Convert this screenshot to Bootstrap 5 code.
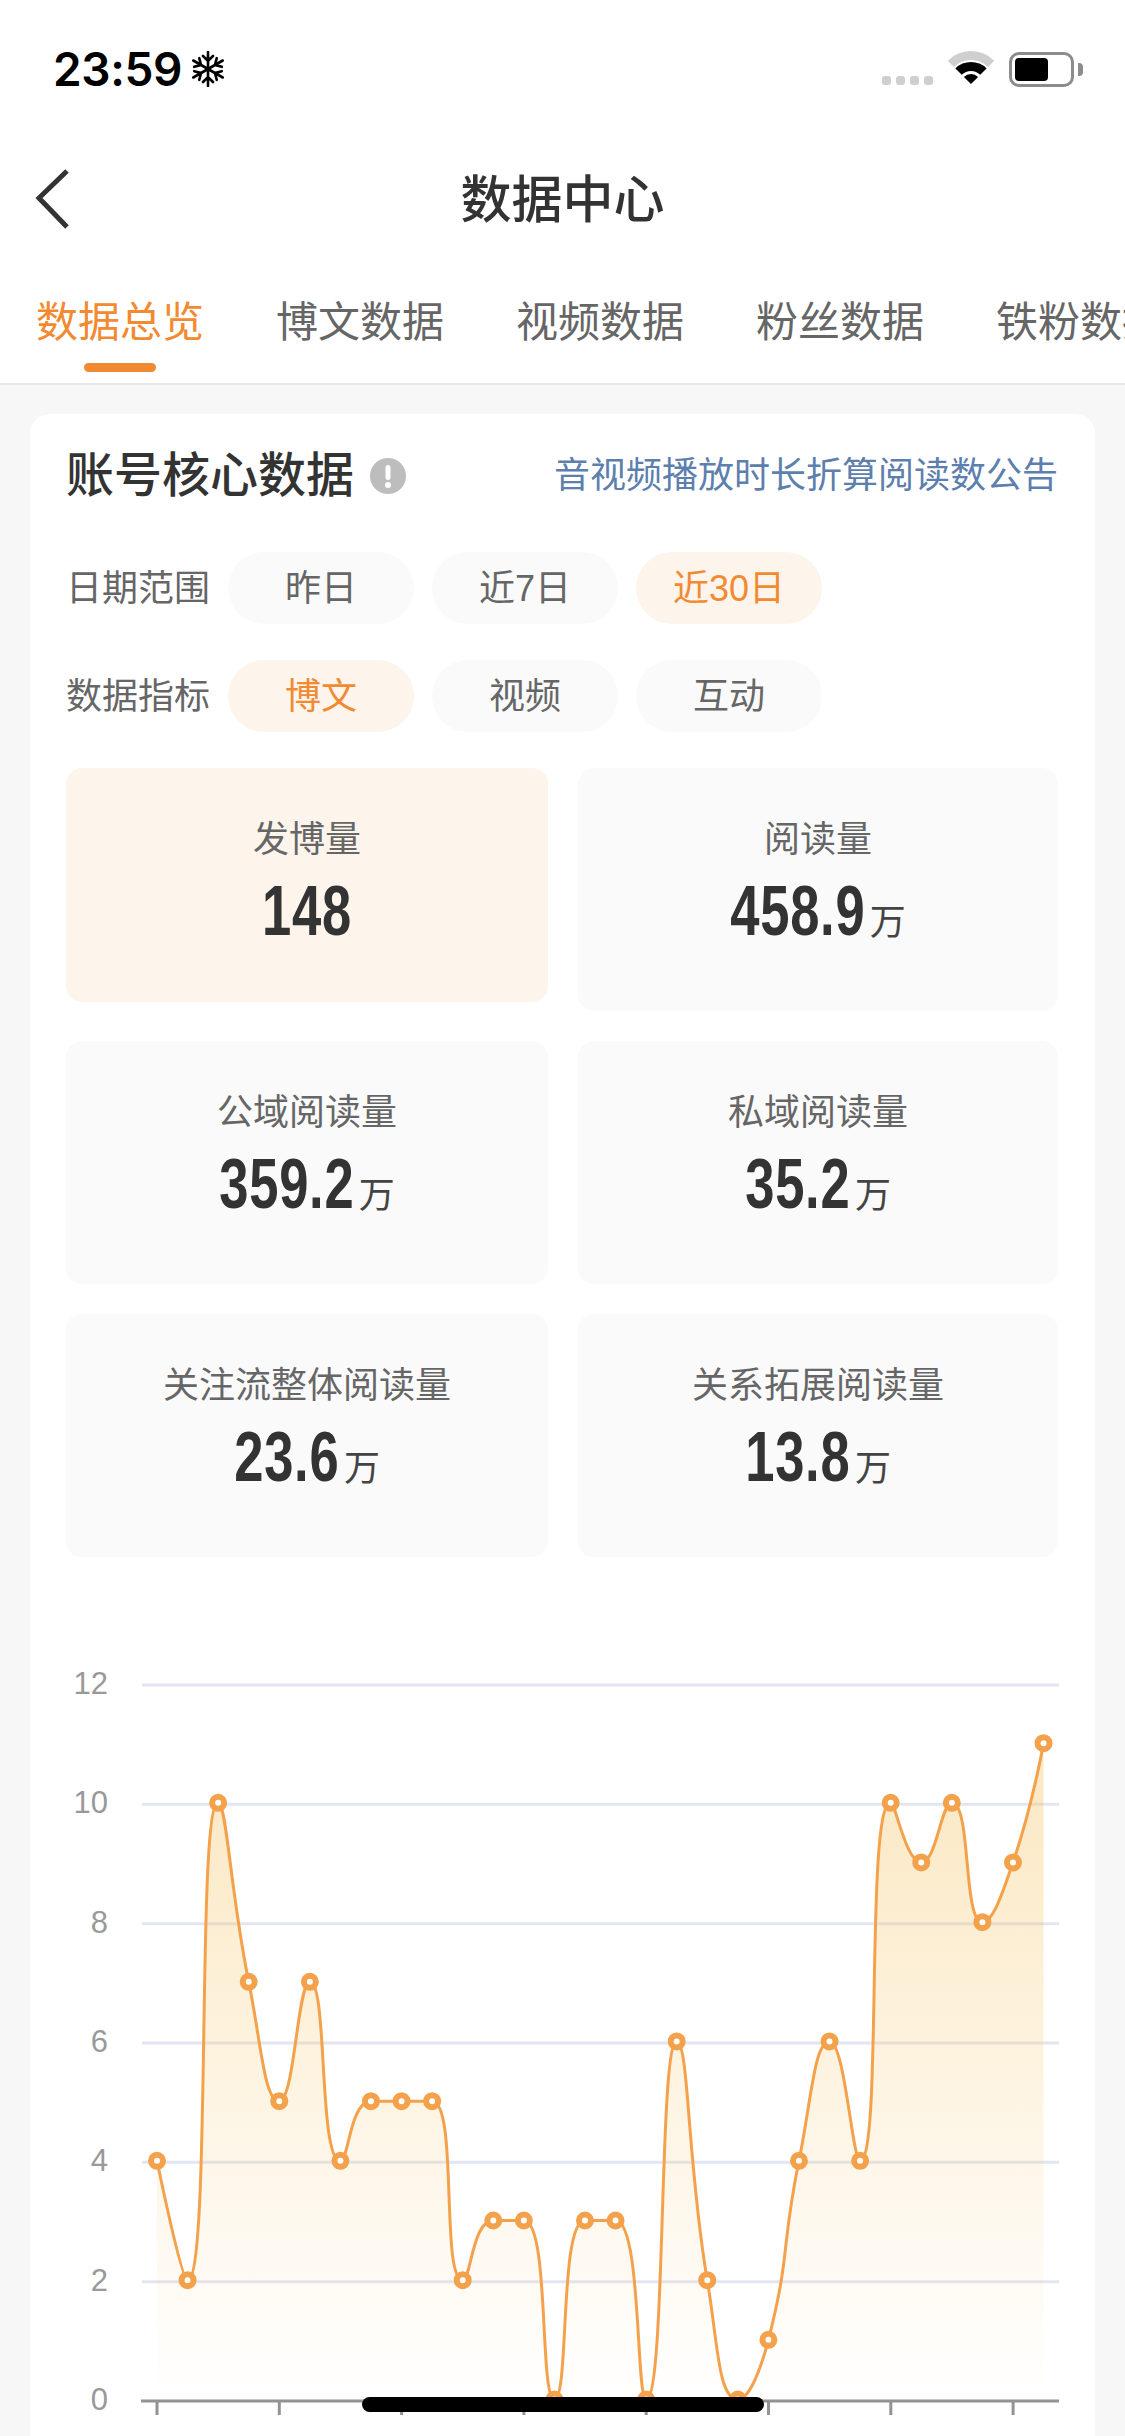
<!DOCTYPE html>
<html lang="zh">
<head>
<meta charset="utf-8">
<title>数据中心</title>
<link href="https://cdn.jsdelivr.net/npm/bootstrap@5.3.0/dist/css/bootstrap.min.css" rel="stylesheet">
<style>
html,body{margin:0;padding:0}
body{position:relative;width:1125px;height:2436px;overflow:hidden;background:#f7f7f7;color:#333;font-family:"Liberation Sans","Noto Sans CJK SC",sans-serif}
.top-white{background:#fff}
.status-strip{height:138px;padding:0 42px 0 53px}
.clock{font-family:Inter,"Liberation Sans",sans-serif;font-weight:600;font-size:46px;line-height:1;color:#000;letter-spacing:-.4px}
.flake{margin-left:9px}
.dots{gap:5px;align-self:flex-end;margin-bottom:2px}
.dots i{display:block;width:9px;height:9px;border-radius:3px;background:#cfcfcf}
.batt{width:65px;height:35px;border:3px solid #8c8c8c;border-radius:10px;padding:3px;margin-left:15px}
.batt i{display:block;width:33px;height:23px;background:#000;border-radius:4px}
.batt-cap{width:5px;height:13px;background:#8c8c8c;border-radius:0 4px 4px 0;margin-left:4px}
.wifi{margin-left:15px}
.nav-strip{height:122px;padding-left:35px}
.nav-title{left:0;right:0;top:2px;bottom:0;font-size:51px;font-weight:500;line-height:122px;text-align:center;color:#333;pointer-events:none}
.tab-strip{height:125px;padding:33px 0 0 36px;gap:72px;overflow:hidden;white-space:nowrap;border-bottom:2px solid #e8e8e8}
.tab-item{flex:none;font-size:42px;line-height:60px;color:#666;display:flex;flex-direction:column;align-items:center}
.tab-item.on{color:#f28a32}
.tab-item.on::after{content:"";display:block;width:72px;height:9px;border-radius:5px;background:#f28a32;margin-top:10px}
.page-wrap{padding:29px 30px 0}
.panel{background:#fff;border-radius:20px 20px 0 0;padding:32px 37px 0 36px;height:2100px}
.panel-head{height:60px}
.panel-title{font-size:48px;font-weight:500;line-height:60px;color:#333}
.info-mark{margin-left:16px}
.notice{font-size:36px;line-height:60px;color:#5d7fae;text-decoration:none}
.filter-row{gap:18px;height:72px;margin-top:36px}
.filter-row.first{margin-top:46px}
.filter-label{font-size:36px;color:#666;width:144px;line-height:74px;white-space:nowrap}
.chip{width:186px;height:72px;border-radius:36px;background:#fafafa;color:#666;font-size:36px;line-height:74px;text-align:center}
.chip.on{background:#fdf4ec;color:#f28a32}
.metric-grid{--bs-gutter-x:30px;--bs-gutter-y:30px;margin-top:6px}
.metric-grid>.col-6:nth-child(odd) .tile{margin-right:-1px}
.metric-grid>.col-6:nth-child(even) .tile{margin-left:1px}
.tile{height:243px;border-radius:16px;background:#fafafa;text-align:center;padding-top:47px}
.tile.on{height:234px;background:#fdf4ec}
.tile-label{font-size:36px;line-height:50px;color:#666}
.tile-value{margin-top:6px;line-height:80px;height:80px;color:#333;white-space:nowrap;transform:scaleX(.74)}
.digits{font-weight:700;font-size:71px;letter-spacing:1px}
.unit{display:inline-block;width:48.6px;margin-left:6px;font-size:36px;line-height:1;color:#444;text-align:center;transform:scaleX(1.351)}
.chart-box{display:block;margin-top:93px;overflow:visible}
.axis-text{font-family:"Liberation Sans",sans-serif;font-size:31px;fill:#999;text-anchor:end;dominant-baseline:central}
.home-bar{left:362px;bottom:24px;width:402px;height:15px;border-radius:8px;background:#000}
</style>
</head>
<body>
<div class="top-white">
  <div class="status-strip d-flex align-items-center justify-content-between">
    <div class="d-flex align-items-center">
      <span class="clock">23:59</span>
      <svg class="flake" width="34" height="36" viewBox="-17 -18 34 36" fill="none" stroke="#000" stroke-width="2.6" stroke-linecap="round">
        <path d="M0 0V-17M-5 -13L0 -8L5 -13M0 0V17M-5 13L0 8L5 13"/>
        <path transform="rotate(60)" d="M0 0V-17M-5 -13L0 -8L5 -13M0 0V17M-5 13L0 8L5 13"/>
        <path transform="rotate(120)" d="M0 0V-17M-5 -13L0 -8L5 -13M0 0V17M-5 13L0 8L5 13"/>
      </svg>
    </div>
    <div class="d-flex align-items-center">
      <div class="dots d-flex"><i></i><i></i><i></i><i></i></div>
      <svg class="wifi" width="46" height="36" viewBox="-23 -33 46 36">
        <path fill="#cfcfcf" d="M-23.3 -23.3A33 33 0 0 1 23.3 -23.3L17 -17A24 24 0 0 0 -17 -17Z"/>
        <path fill="#000" d="M-15.6 -15.6A22 22 0 0 1 15.6 -15.6L9.2 -9.2A13 13 0 0 0 -9.2 -9.2Z"/>
        <path fill="#000" d="M0 0L-7.1 -7.1A10 10 0 0 1 7.1 -7.1Z"/>
      </svg>
      <div class="batt"><i></i></div>
      <div class="batt-cap"></div>
    </div>
  </div>
  <div class="nav-strip position-relative d-flex align-items-center">
    <svg width="36" height="60" viewBox="0 0 36 60" fill="none" stroke="#333" stroke-width="5"><path d="M32 2L4 29L32 58"/></svg>
    <div class="nav-title position-absolute">数据中心</div>
  </div>
  <div class="tab-strip d-flex">
    <div class="tab-item on">数据总览</div>
    <div class="tab-item">博文数据</div>
    <div class="tab-item">视频数据</div>
    <div class="tab-item">粉丝数据</div>
    <div class="tab-item">铁粉数据</div>
  </div>
</div>
<div class="page-wrap">
  <div class="panel">
    <div class="panel-head d-flex align-items-center justify-content-between">
      <div class="d-flex align-items-center">
        <span class="panel-title">账号核心数据</span>
        <svg class="info-mark" width="36" height="36" viewBox="0 0 36 36"><circle cx="18" cy="18" r="18" fill="#bdbdbd"/><rect x="15.5" y="7" width="5" height="15" rx="2.5" fill="#fff"/><circle cx="18" cy="27" r="3" fill="#fff"/></svg>
      </div>
      <a class="notice" href="#">音视频播放时长折算阅读数公告</a>
    </div>
    <div class="filter-row first d-flex">
      <span class="filter-label">日期范围</span>
      <span class="chip">昨日</span><span class="chip">近7日</span><span class="chip on">近30日</span>
    </div>
    <div class="filter-row d-flex">
      <span class="filter-label">数据指标</span>
      <span class="chip on">博文</span><span class="chip">视频</span><span class="chip">互动</span>
    </div>
    <div class="row metric-grid">
      <div class="col-6"><div class="tile on"><div class="tile-label">发博量</div><div class="tile-value"><span class="digits">148</span></div></div></div>
      <div class="col-6"><div class="tile"><div class="tile-label">阅读量</div><div class="tile-value"><span class="digits">458.9</span><span class="unit">万</span></div></div></div>
      <div class="col-6"><div class="tile"><div class="tile-label">公域阅读量</div><div class="tile-value"><span class="digits">359.2</span><span class="unit">万</span></div></div></div>
      <div class="col-6"><div class="tile"><div class="tile-label">私域阅读量</div><div class="tile-value"><span class="digits">35.2</span><span class="unit">万</span></div></div></div>
      <div class="col-6"><div class="tile"><div class="tile-label">关注流整体阅读量</div><div class="tile-value"><span class="digits">23.6</span><span class="unit">万</span></div></div></div>
      <div class="col-6"><div class="tile"><div class="tile-label">关系拓展阅读量</div><div class="tile-value"><span class="digits">13.8</span><span class="unit">万</span></div></div></div>
    </div>
    <svg class="chart-box" id="chart" width="992" height="786" viewBox="66 1650 992 786" xmlns="http://www.w3.org/2000/svg">
      <defs>
        <linearGradient id="areaFill" gradientUnits="userSpaceOnUse" x1="0" y1="1750" x2="0" y2="2401">
          <stop offset="0" stop-color="#f5c25f" stop-opacity=".38"/>
          <stop offset="1" stop-color="#f5c25f" stop-opacity="0"/>
        </linearGradient>
      </defs>
      <g id="grid"></g>
      <path id="area" fill="url(#areaFill)"></path>
      <path id="line" fill="none" stroke="#f4a14c" stroke-width="3"></path>
      <g id="marks"></g>
    </svg>
  </div>
</div>
<div class="home-bar position-absolute"></div>
<script src="https://cdn.jsdelivr.net/npm/bootstrap@5.3.0/dist/js/bootstrap.bundle.min.js"></script>
<script>
(function(){
  var NS='http://www.w3.org/2000/svg';
  function el(parent,name,attrs,text){var e=document.createElementNS(NS,name);for(var k in attrs)e.setAttribute(k,attrs[k]);if(text!=null)e.textContent=text;parent.appendChild(e);return e;}
  var data=[4,2,10,7,5,7,4,5,5,5,2,3,3,0,3,3,0,6,2,0,1,4,6,4,10,9,10,8,9,11];
  var x0=157,stepX=30.57,y0=2401,stepY=59.67;
  var pts=data.map(function(v,i){return [x0+i*stepX,y0-1.5-v*stepY];});
  var grid=document.getElementById('grid');
  for(var v=0;v<=12;v+=2){
    var y=y0-v*stepY;
    if(v>0)el(grid,'line',{x1:142,x2:1059,y1:y,y2:y,stroke:'#e2e6f2','stroke-width':3});
    el(grid,'text',{x:108,y:y-1.5,'class':'axis-text'},String(v));
  }
  el(grid,'line',{x1:141,x2:1059,y1:y0,y2:y0,stroke:'#939393','stroke-width':3});
  for(var t=0;t<8;t++){var tx=157+t*122.3;el(grid,'line',{x1:tx,x2:tx,y1:y0,y2:2415,stroke:'#939393','stroke-width':3});}
  var s=0.5,n=pts.length,d='M'+pts[0][0]+' '+pts[0][1],cx=pts[0][0],cy=pts[0][1];
  function clamp(a,b,c){return Math.max(Math.min(a,Math.max(b,c)),Math.min(b,c));}
  for(var i=1;i<n;i++){
    var p=pts[i],q=pts[i-1],nx=i<n-1?pts[i+1]:null,c0x,c0y,c1x,c1y;
    if(nx){
      var vx=nx[0]-q[0],vy=nx[1]-q[1];
      var lp=Math.hypot(p[0]-q[0],p[1]-q[1]),ln=Math.hypot(nx[0]-p[0],nx[1]-p[1]),r=ln/(ln+lp);
      c1x=clamp(p[0]+vx*s*r,nx[0],p[0]);c1y=clamp(p[1]+vy*s*r,nx[1],p[1]);
      vx=c1x-p[0];vy=c1y-p[1];
      c0x=clamp(p[0]-vx*lp/ln,q[0],p[0]);c0y=clamp(p[1]-vy*lp/ln,q[1],p[1]);
      vx=p[0]-c0x;vy=p[1]-c0y;
      c1x=p[0]+vx*ln/lp;c1y=p[1]+vy*ln/lp;
    }else{c0x=p[0];c0y=p[1];c1x=p[0];c1y=p[1];}
    d+='C'+cx+' '+cy+' '+c0x+' '+c0y+' '+p[0]+' '+p[1];
    cx=c1x;cy=c1y;
  }
  document.getElementById('line').setAttribute('d',d);
  document.getElementById('area').setAttribute('d',d+'L'+pts[n-1][0]+' '+y0+'L'+pts[0][0]+' '+y0+'Z');
  var marks=document.getElementById('marks');
  pts.forEach(function(p){el(marks,'circle',{cx:p[0],cy:p[1],r:6,fill:'#fff',stroke:'#f4a14c','stroke-width':6});});
})();
</script>
</body>
</html>
